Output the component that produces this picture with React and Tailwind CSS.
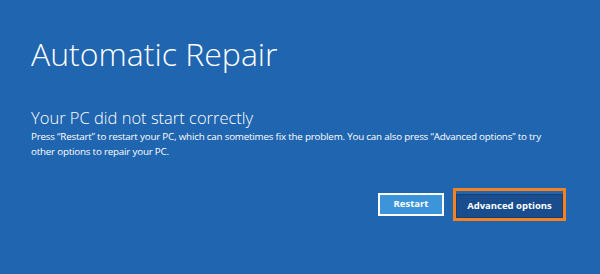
import React from "react";

function App() {
  return (
    <div
      className="w-[600px] h-[274px] bg-[#1f65b0] text-white overflow-hidden"
      style={{ fontFamily: '"Open Sans", "Noto Sans", sans-serif' }}
    >
      <div className="pl-[31px] pr-[34px] pt-[34px]">
        <h1 className="text-[32px] leading-[40px] font-light">
          Automatic Repair
        </h1>
        <div className="mt-[33px]">
          <p className="text-[16.5px] leading-[22px] font-light">
            Your PC did not start correctly
          </p>
          <p className="text-[9.8px] leading-[15px] tracking-[-0.2px] w-[535px]">
            Press “Restart” to restart your PC, which can sometimes fix the problem. You can also press “Advanced options” to try other options to repair your PC.
          </p>
        </div>
        <div className="flex justify-end items-center gap-[9px] mt-[29px]">
          <button className="w-[66px] h-[23px] border-2 border-white bg-[#3d95d9] text-[9.5px] font-bold text-white">
            Restart
          </button>
          <div className="border-[3px] border-[#f5821f]">
            <button className="w-[107px] h-[24px] bg-[#194d8d] border border-[#173f73] text-[9.5px] font-bold text-white">
              Advanced options
            </button>
          </div>
        </div>
      </div>
    </div>
  );
}

export default App;
